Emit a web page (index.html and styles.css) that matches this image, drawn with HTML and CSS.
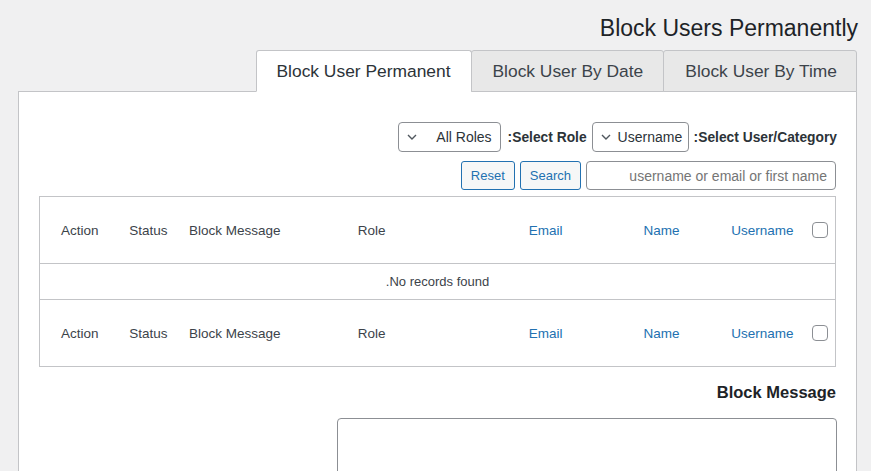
FILE: index.html
```html
<!DOCTYPE html>
<html lang="en">
<head>
<meta charset="utf-8">
<title>Block Users Permanently</title>
<link rel="stylesheet" href="styles.css">
</head>
<body>
<div class="wrap">
  <h1 class="title">Block Users Permanently</h1>
  <nav class="tabs">
    <a class="tab tab-active">Block User Permanent</a>
    <a class="tab">Block User By Date</a>
    <a class="tab">Block User By Time</a>
  </nav>
  <div class="panel">
    <div class="filter-row">
      <div class="select select-roles">
        <svg class="chev" width="10" height="6" viewBox="0 0 10 6"><path d="M1 1l4 4 4-4" fill="none" stroke="#50575e" stroke-width="1.4"/></svg>
        <span>All Roles</span>
      </div>
      <span class="flabel flabel-role">:Select Role</span>
      <div class="select select-user">
        <svg class="chev" width="10" height="6" viewBox="0 0 10 6"><path d="M1 1l4 4 4-4" fill="none" stroke="#50575e" stroke-width="1.4"/></svg>
        <span>Username</span>
      </div>
      <span class="flabel flabel-user">:Select User/Category</span>
    </div>
    <div class="search-row">
      <button class="btn">Reset</button>
      <button class="btn">Search</button>
      <input class="search-input" type="text" placeholder="username or email or first name">
    </div>
    <table class="users">
      <colgroup>
        <col class="c-action"><col class="c-status"><col class="c-msg"><col class="c-role">
        <col class="c-email"><col class="c-name"><col class="c-user"><col class="c-check">
      </colgroup>
      <thead>
        <tr>
          <th>Action</th><th>Status</th><th>Block Message</th><th>Role</th>
          <th class="link">Email</th><th class="link">Name</th><th class="link">Username</th>
          <th class="check"><input type="checkbox" class="cb"></th>
        </tr>
      </thead>
      <tbody>
        <tr><td colspan="8" class="empty">.No records found</td></tr>
      </tbody>
      <tfoot>
        <tr>
          <th>Action</th><th>Status</th><th>Block Message</th><th>Role</th>
          <th class="link">Email</th><th class="link">Name</th><th class="link">Username</th>
          <th class="check"><input type="checkbox" class="cb"></th>
        </tr>
      </tfoot>
    </table>
    <div class="msg-section">
      <h3 class="msg-title">Block Message</h3>
      <textarea class="msg-input"></textarea>
    </div>
  </div>
</div>
</body>
</html>
```
FILE: styles.css
```css
html, body {
  margin: 0;
  padding: 0;
  background: #f0f0f1;
  font-family: "Liberation Sans", Arial, sans-serif;
  color: #3c434a;
  overflow: hidden;
}

.wrap {
  margin: 0 14px 0 18px;
}

.title {
  margin: 0 -1px 7px 0;
  padding-top: 14px;
  font-size: 23px;
  line-height: 29px;
  font-weight: 400;
  color: #1d2327;
  text-align: right;
}

.tabs {
  display: flex;
  justify-content: flex-end;
  position: relative;
  z-index: 1;
  margin-bottom: -1px;
}

.tab {
  display: block;
  height: 40px;
  line-height: 40px;
  padding: 0 20px 0 21px;
  border: 1px solid #c3c4c7;
  border-radius: 3px 3px 0 0;
  margin-left: -1px;
  background: #e8e8e8;
  font-size: 17.4px;
  color: #3c434a;
  white-space: nowrap;
}

.tab:last-child {
  padding-left: 21px;
  padding-right: 19px;
}

.tab-active {
  background: #fff;
  border-bottom-color: #fff;
  color: #2c3338;
  padding-left: 20px;
}

.panel {
  background: #fff;
  border: 1px solid #c3c4c7;
  padding: 30px 20px 40px 20px;
}

.filter-row {
  display: flex;
  justify-content: flex-end;
  align-items: center;
  height: 30px;
  margin-right: -1px;
}

.select {
  box-sizing: border-box;
  height: 30px;
  border: 1px solid #8c8f94;
  border-radius: 4px;
  display: flex;
  align-items: center;
  font-size: 14px;
  color: #2c3338;
  padding: 0 8px;
  background: #fff;
}

.select-roles {
  width: 103px;
  justify-content: space-between;
}

.select-user {
  width: 97px;
  gap: 7px;
}

.chev {
  display: block;
  flex: none;
}

.flabel {
  font-size: 13.8px;
  font-weight: 700;
  color: #2c3338;
}

.flabel-role {
  margin-left: 7px;
  margin-right: 5px;
}

.flabel-user {
  margin-left: 5px;
}

.search-row {
  display: flex;
  justify-content: flex-end;
  align-items: center;
  margin-top: 9px;
  gap: 5px;
}

.btn {
  box-sizing: border-box;
  height: 29px;
  padding: 0 9px;
  border: 1px solid #2271b1;
  border-radius: 3px;
  background: #f6f7f7;
  color: #2271b1;
  font-family: "Liberation Sans", Arial, sans-serif;
  font-size: 13px;
}

.search-input {
  box-sizing: border-box;
  width: 250px;
  height: 29px;
  border: 1px solid #8c8f94;
  border-radius: 4px;
  padding: 0 8px;
  font-family: "Liberation Sans", Arial, sans-serif;
  font-size: 14px;
  text-align: right;
  margin: 0;
}

.search-input::placeholder {
  color: #757575;
}

.users {
  width: 100%;
  margin-top: 6px;
  table-layout: fixed;
  border-collapse: collapse;
  border: 1px solid #c3c4c7;
  font-size: 13.5px;
}

.c-action { width: 67px; }
.c-status { width: 69px; }
.c-msg { width: 113px; }
.c-role { width: 105px; }
.c-email { width: 177px; }
.c-name { width: 117px; }
.c-user { width: 114px; }
.c-check { width: 34px; }

.users th {
  height: 66px;
  padding: 0 8px 0 0;
  text-align: right;
  font-weight: 400;
  color: #3c434a;
  vertical-align: middle;
  white-space: nowrap;
}

.users th.link {
  color: #2271b1;
}

.users thead tr {
  border-bottom: 1px solid #c3c4c7;
}

.users tfoot tr {
  border-top: 1px solid #c3c4c7;
}

.users th.check {
  padding-right: 7px;
}

.cb {
  -webkit-appearance: none;
  appearance: none;
  display: block;
  margin: 0 0 0 auto;
  width: 16px;
  height: 16px;
  border: 1px solid #8c8f94;
  border-radius: 4px;
  background: #fff;
}

.empty {
  height: 35px;
  padding: 0;
  text-align: center;
  font-size: 13px;
  color: #3c434a;
  vertical-align: middle;
}

.msg-section {
  display: flex;
  flex-direction: column;
  align-items: flex-end;
}

.msg-title {
  margin: 15px 0 16px 0;
  font-size: 16.5px;
  line-height: 20px;
  font-weight: 700;
  color: #1d2327;
}

.msg-input {
  box-sizing: border-box;
  width: 500px;
  height: 100px;
  border: 1px solid #8c8f94;
  border-radius: 4px;
  margin: 0 -1px 0 0;
  resize: none;
}
```
